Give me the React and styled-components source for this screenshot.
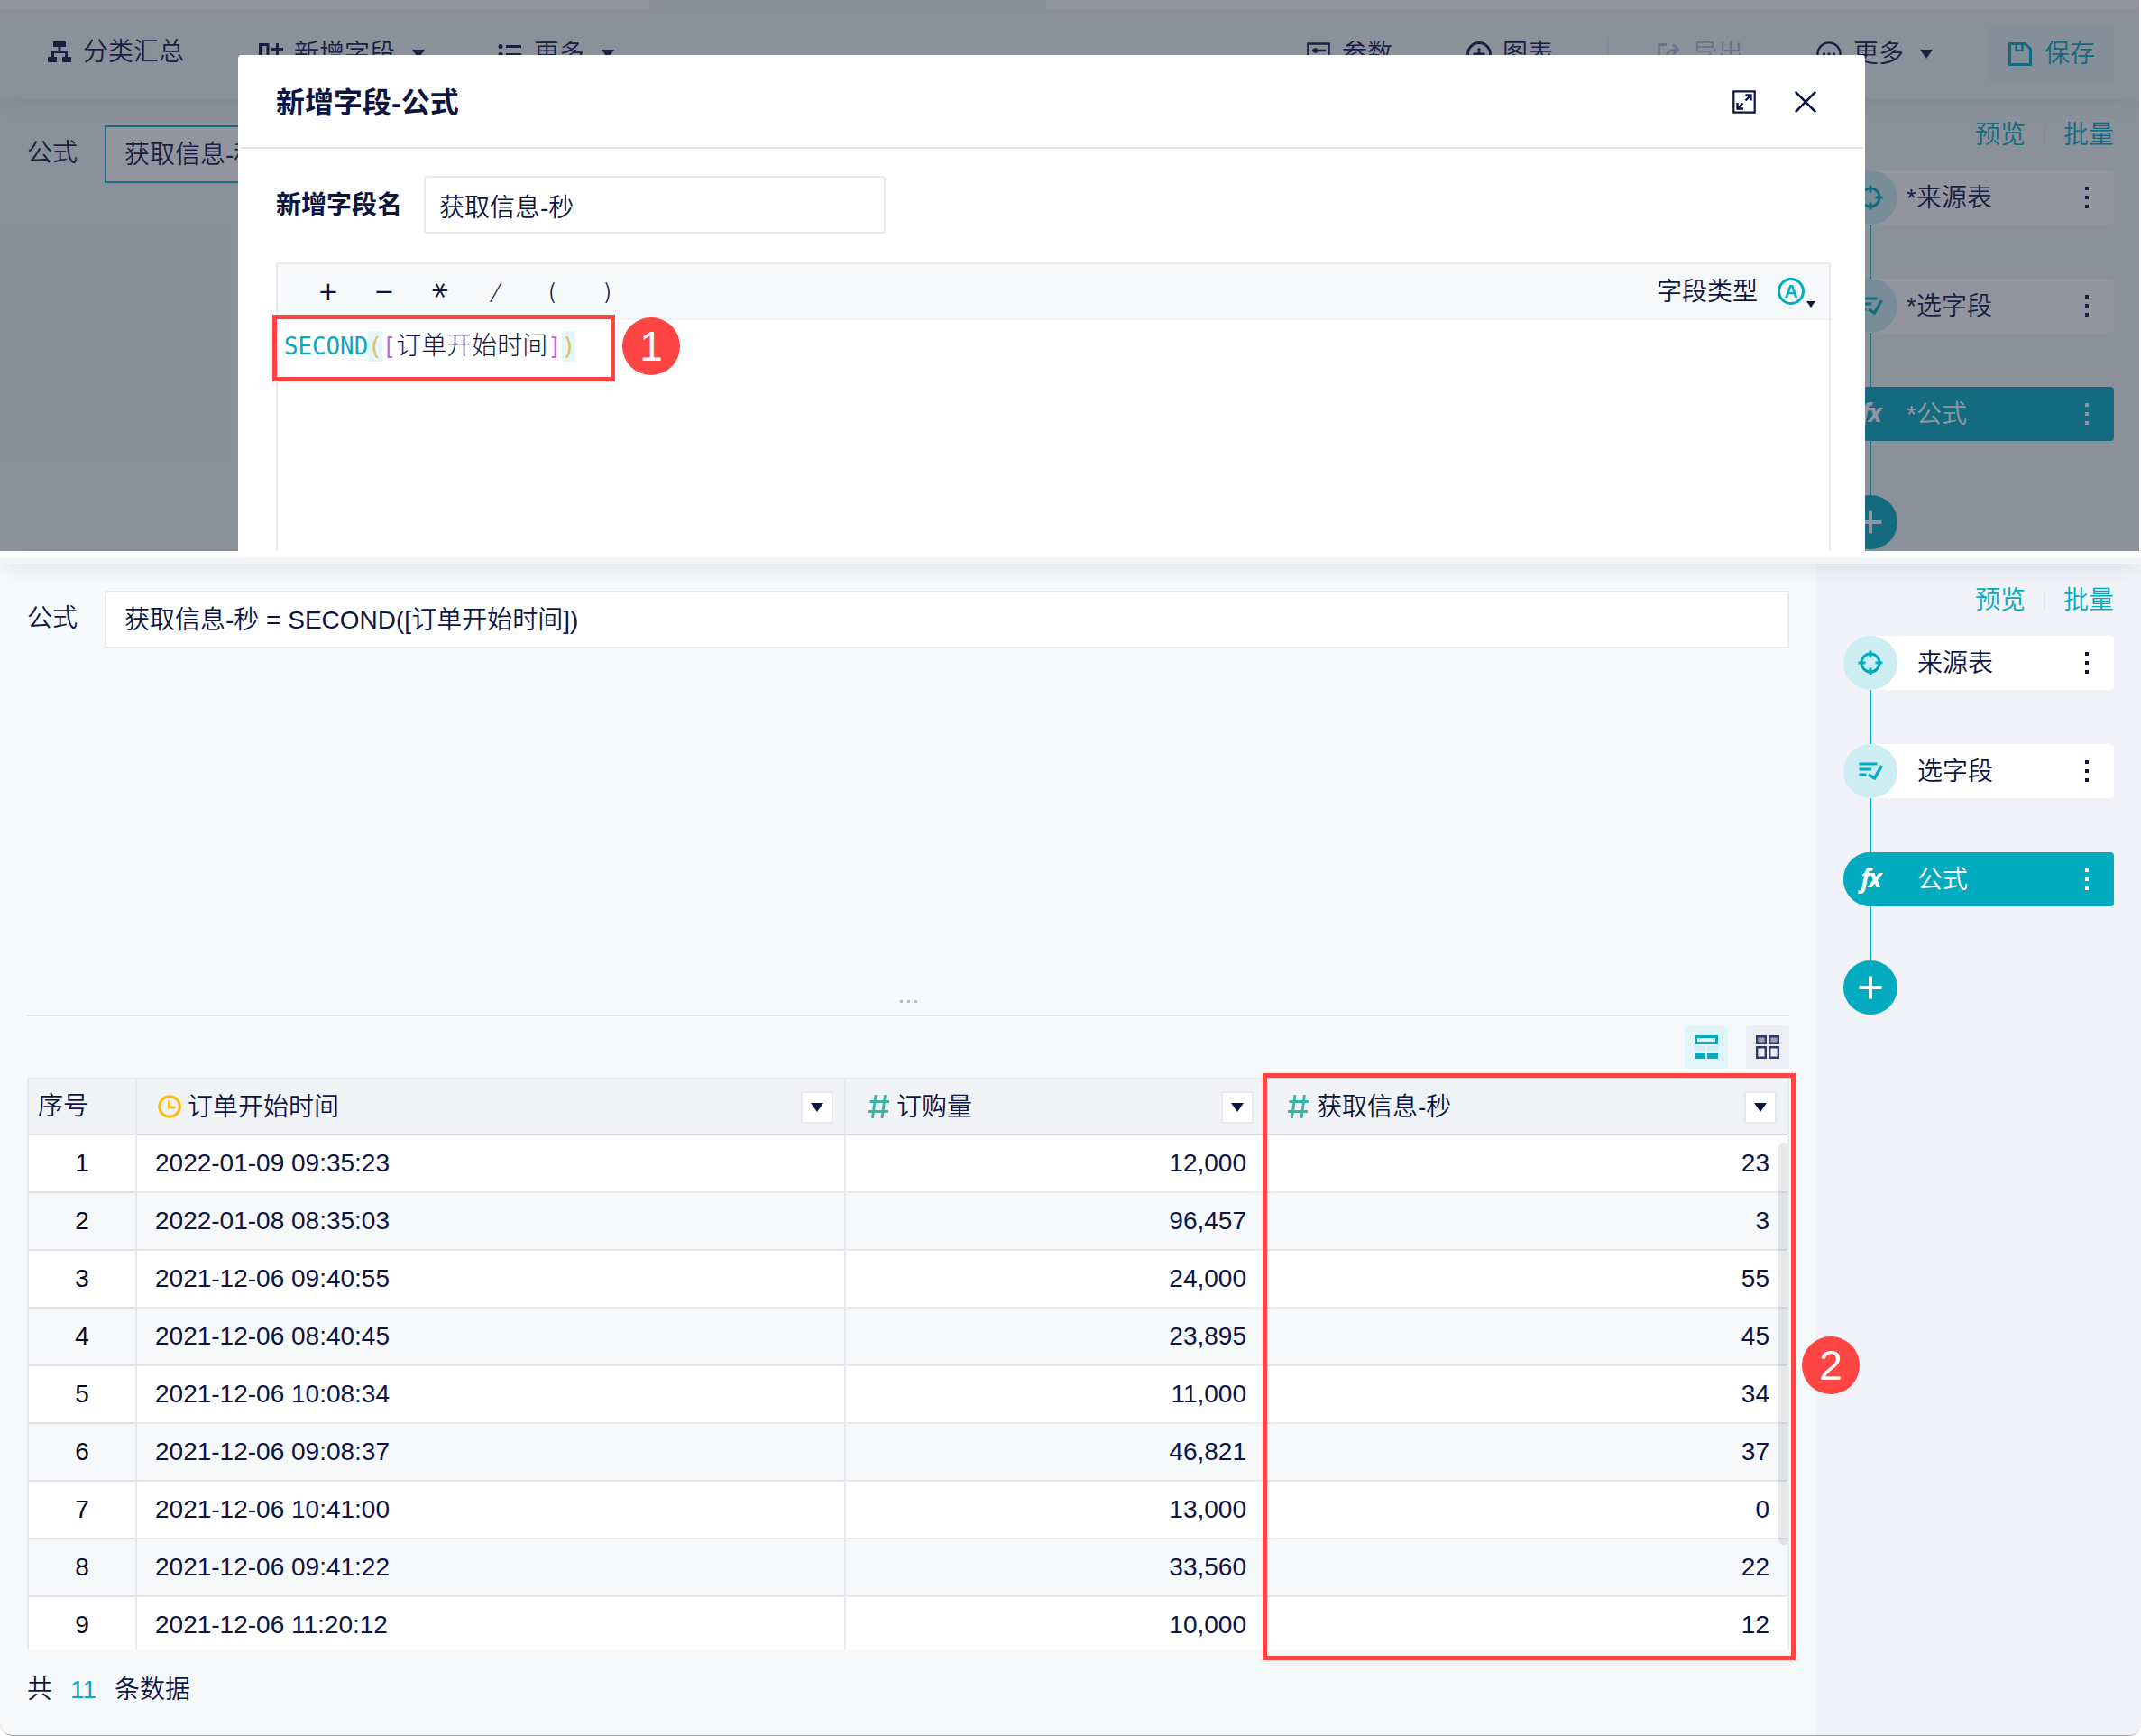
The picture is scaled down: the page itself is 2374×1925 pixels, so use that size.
import React from "react";
import styled, { createGlobalStyle } from "styled-components";

const INK = "#0c1442";
const TEAL = "#02abbf";
const RED = "#ff4444";
const LINE = "#e8eaed";

const Global = createGlobalStyle`
  * { box-sizing: border-box; }
  html, body { margin: 0; padding: 0; background: #fff; }
  body {
    width: 2374px;
    height: 1925px;
    overflow: hidden;
    font-family: "Liberation Sans", "Noto Sans CJK SC", sans-serif;
    font-size: 28px;
    font-weight: 350;
    line-height: 36px;
    color: ${INK};
    white-space: nowrap;
  }
  svg { display: block; flex: none; }
`;

const Page = styled.main`
  position: relative;
  width: 2374px;
  height: 1925px;
  overflow: hidden;
  display: flex;
  flex-direction: column;
`;

/* ---------- shared pieces ---------- */

const Caret = styled.i`
  width: 0;
  height: 0;
  flex: none;
  border: solid transparent;
  border-width: ${(p) => p.$h || 10}px ${(p) => p.$w || 7}px 0;
  border-top-color: ${INK};
  margin-left: ${(p) => p.$ml || 0}px;
`;

const Sidebar = styled.aside`
  flex: 1;
  padding: 23px ${(p) => p.$right}px 0 30px;
  background: ${(p) => p.$bg || "transparent"};
  display: flex;
  flex-direction: column;
`;

const Links = styled.div`
  display: flex;
  align-items: center;
  justify-content: flex-end;
  height: 36px;
  margin-bottom: 21px;
  color: ${TEAL};
`;

const LinkRule = styled.span`
  width: 2px;
  height: 20px;
  margin: 0 20px;
  background: #e6e8ee;
`;

const Node = styled.div`
  display: flex;
  align-items: center;
  height: 60px;
  border-radius: 30px 4px 4px 30px;
  background: ${(p) => (p.$active ? TEAL : "#fff")};
  color: ${(p) => (p.$active ? "#fff" : INK)};
`;

const Bubble = styled.span`
  width: 60px;
  height: 60px;
  flex: none;
  border-radius: 50%;
  display: flex;
  align-items: center;
  justify-content: center;
  background: ${(p) => (p.$solid ? TEAL : "#cceef2")};
  color: ${(p) => (p.$solid ? "#fff" : TEAL)};
`;

const NodeName = styled.span`
  flex: 1;
  padding: 1px 0 0 ${(p) => (p.$starred ? 10 : 22)}px;
`;

const Connector = styled.div`
  width: 2px;
  height: 60px;
  margin-left: 29px;
  background: ${TEAL};
`;

const Dots = styled.span`
  display: flex;
  flex-direction: column;
  gap: 6px;
  margin-right: 28px;
  i { width: 4px; height: 4px; background: currentColor; }
`;

const FxText = styled.span`
  font: italic 700 28px/28px "Open Sans", "Noto Sans", sans-serif;
  letter-spacing: -2px;
  padding-bottom: 5px;
`;

function TargetIcon() {
  return (
    <svg width="28" height="28" viewBox="0 0 28 28" fill="none" stroke="currentColor" strokeWidth="3">
      <circle cx="14" cy="14" r="10" />
      <path d="M14 .5v8M14 19.5v8M.5 14h8M19.5 14h8" />
    </svg>
  );
}

function SelectIcon() {
  return (
    <svg width="28" height="28" viewBox="0 0 28 28" fill="none" stroke="currentColor" strokeWidth="3">
      <path d="M1.5 6h20M1.5 12h13.5M1.5 18h8" />
      <path d="M12 18l6.5 4 8-14" strokeWidth="3.4" />
    </svg>
  );
}

function PlusIcon() {
  return (
    <svg width="26" height="26" viewBox="0 0 26 26" stroke="currentColor" strokeWidth="4">
      <path d="M.5 13h25M13 .5v25" />
    </svg>
  );
}

function Flow({ starred }) {
  const mark = starred ? "*" : "";
  const dots = (
    <Dots><i /><i /><i /></Dots>
  );
  return (
    <>
      <Links>
        <span>预览</span>
        <LinkRule />
        <span>批量</span>
      </Links>
      <Node>
        <Bubble><TargetIcon /></Bubble>
        <NodeName $starred={starred}>{mark}来源表</NodeName>
        {dots}
      </Node>
      <Connector />
      <Node>
        <Bubble><SelectIcon /></Bubble>
        <NodeName $starred={starred}>{mark}选字段</NodeName>
        {dots}
      </Node>
      <Connector />
      <Node $active>
        <Bubble $solid><FxText>fx</FxText></Bubble>
        <NodeName $starred={starred}>{mark}公式</NodeName>
        {dots}
      </Node>
      <Connector />
      <Bubble $solid><PlusIcon /></Bubble>
    </>
  );
}

const FormulaRow = styled.div`
  display: flex;
  align-items: center;
  height: 64px;
`;

const FormulaLabel = styled.span`
  width: 86px;
  padding: 0 0 3px 0;
`;

const FormulaBox = styled.div`
  flex: 1;
  height: 64px;
  padding: 13px 20px 0;
  border: 2px solid ${(p) => (p.$focus ? TEAL : LINE)};
  background: #fff;
`;

/* ---------- upper screen ---------- */

const Upper = styled.section`
  position: relative;
  width: 2372px;
  height: 611px;
  flex: none;
  overflow: hidden;
  background: #f0f6f5;
`;

const TabStrip = styled.div`
  display: grid;
  grid-template-columns: 720px 440px 1fr;
  height: 9px;
  span:nth-child(odd) { background: #fff; }
`;

const Toolbar = styled.header`
  display: flex;
  align-items: center;
  height: 100px;
  padding: 2px 28px 0 53px;
  box-shadow: 0 8px 22px -6px rgba(30, 35, 80, 0.1);
`;

const Tool = styled.div`
  display: flex;
  align-items: center;
  height: 60px;
  margin-left: ${(p) => p.$ml || 0}px;
  padding-bottom: ${(p) => p.$lift || 0}px;
  gap: ${(p) => p.$gap || 13}px;
  color: ${(p) => (p.$muted ? "#b4b7cb" : INK)};
`;

const Push = styled.span`
  flex: 1;
`;

const ToolRule = styled.span`
  width: 2px;
  height: 36px;
  margin: 0 54px 0 60px;
  background: #e6e9ee;
`;

const Save = styled.div`
  display: flex;
  align-items: center;
  width: 141px;
  height: 60px;
  gap: 14px;
  margin-left: 60px;
  padding: 0 0 1px 24px;
  border-radius: 4px;
  background: #e3f3f5;
  color: ${TEAL};
`;

const UpperBody = styled.div`
  display: flex;
  height: 502px;
`;

const UpperMain = styled.div`
  width: 2014px;
  flex: none;
  padding: 30px 30px 0;
  display: flex;
  flex-direction: column;
  justify-content: space-between;
`;

const BottomRule = styled.div`
  height: 2px;
  background: #e4e5ec;
`;

const Shade = styled.div`
  position: absolute;
  inset: 0;
  background: rgba(37, 43, 63, 0.5);
`;

const Dialog = styled.div`
  position: absolute;
  left: 264px;
  top: 61px;
  width: 1804px;
  height: 550px;
  border-radius: 4px 4px 0 0;
  background: #fff;
  overflow: hidden;
`;

const DialogHead = styled.div`
  display: flex;
  align-items: center;
  height: 104px;
  margin: 0 2px;
  padding: 2px 52px 0 40px;
  border-bottom: 2px solid #e2e3e8;
`;

const DialogTitle = styled.h1`
  flex: 1;
  margin: 0;
  padding-top: 1px;
  font-size: 32px;
  font-weight: 700;
`;

const DialogActions = styled.div`
  display: flex;
  align-items: center;
  gap: 43px;
`;

const DialogBody = styled.div`
  padding: 30px 38px 0 42px;
`;

const NameRow = styled.div`
  display: flex;
  align-items: center;
  height: 64px;
`;

const NameLabel = styled.span`
  width: 164px;
  padding-top: 1px;
  font-weight: 700;
`;

const NameInput = styled.div`
  width: 512px;
  height: 64px;
  padding: 16px 15px 0;
  border: 2px solid #e8e8ed;
  border-radius: 4px;
`;

const Editor = styled.div`
  height: 360px;
  margin-top: 32px;
  border: 2px solid #e8e8ed;
`;

const EditorBar = styled.div`
  display: flex;
  align-items: center;
  height: 62px;
  padding: 0 15px 0 25px;
  border-bottom: 2px solid #f1f2f5;
  background: #f7f8fa;
`;

const Operator = styled.span`
  width: 62px;
  padding-bottom: ${(p) => p.$lift || 0}px;
  text-align: center;
  font-family: ${(p) => (p.$mono ? '"DejaVu Sans Mono"' : '"Noto Sans CJK SC"')}, sans-serif;
  font-weight: ${(p) => p.$weight || 350};
  font-size: ${(p) => p.$size || 36}px;
  line-height: 36px;
  transform: ${(p) => p.$turn || "none"};
`;

const FieldType = styled.div`
  display: flex;
  align-items: center;
  margin-left: auto;
`;

const FieldTypeName = styled.span`
  padding-top: 1px;
  margin-right: 22px;
`;

const CaretLow = styled.span`
  padding-top: 29px;
`;

const Code = styled.div`
  padding: 12px 0 0 7px;
  font-family: "DejaVu Sans Mono", "Noto Sans CJK SC", monospace;
  font-size: 25.6px;
  font-weight: 300;
  line-height: 34px;
  display: flex;
`;

const Tok = styled.span`
  height: 34px;
  color: ${(p) => p.$c};
  font-size: ${(p) => p.$size || 25.8}px;
  background: ${(p) => (p.$hit ? "#e4f6f9" : "transparent")};
`;

function OrgIcon() {
  return (
    <svg width="26" height="24" viewBox="0 0 26 24" fill={INK}>
      <path d="M6 0h14v6H6zM0 17h10v6H0zM16 17h10v6H16z" />
      <path d="M13 5v6M5.500 18v-6.500h15V18" fill="none" stroke={INK} strokeWidth="3" />
    </svg>
  );
}

function AddFieldIcon() {
  return (
    <svg width="27" height="26" viewBox="0 0 27 26" fill="none" stroke={INK} strokeWidth="3">
      <path d="M1.500 2.500h8.500v20H1.500zM14 7.500h13M20.500 1v13" />
    </svg>
  );
}

function ListIcon() {
  return (
    <svg width="27" height="24" viewBox="0 0 27 24" fill={INK}>
      <path d="M9 2h17v3H9zM9 11h17v3H9zM9 20h17v3H9z" />
      <circle cx="3" cy="3.500" r="2.500" />
      <circle cx="3" cy="12.500" r="2.500" />
      <circle cx="3" cy="21.500" r="2.500" />
    </svg>
  );
}

function ParamIcon() {
  return (
    <svg width="26" height="26" viewBox="0 0 26 26" fill="none" stroke={INK} strokeWidth="2.600">
      <path d="M1.500 1.500h23v23h-23zM6 9h15M5 17h15" />
      <circle cx="9.500" cy="9" r="1.500" />
      <circle cx="16.500" cy="17" r="1.500" />
    </svg>
  );
}

function CirclePlusIcon() {
  return (
    <svg width="28" height="28" viewBox="0 0 28 28" fill="none" stroke={INK} strokeWidth="2.800">
      <circle cx="14" cy="14" r="12.500" />
      <path d="M7.500 14h13M14 7.500v13" />
    </svg>
  );
}

function ExportIcon() {
  return (
    <svg width="26" height="26" viewBox="0 0 26 26" fill="none" stroke="#b4b7cb" strokeWidth="2.800">
      <path d="M10 2.500H1.500v22h21V18" />
      <path d="M10 17c0-6 3-9 12-9M17 2.500l6 5.500-6 5.500" />
    </svg>
  );
}

function MoreIcon() {
  return (
    <svg width="28" height="28" viewBox="0 0 28 28" fill="none" stroke={INK} strokeWidth="2.400">
      <circle cx="14" cy="14" r="12.600" />
      <path d="M7 14h3M12.500 14h3M18 14h3" strokeWidth="3" />
    </svg>
  );
}

function SaveIcon() {
  return (
    <svg width="26" height="26" viewBox="0 0 26 26" fill="none" stroke="currentColor" strokeWidth="3">
      <path d="M1.500 1.500h17l6 6v17h-23z" />
      <path d="M8.500 2v7h7V2" strokeWidth="2.600" />
    </svg>
  );
}

function ExpandIcon() {
  return (
    <svg width="26" height="26" viewBox="0 0 26 26" fill="none" stroke={INK} strokeWidth="2.200">
      <path d="M1.300 1.300h23.400v23.400H1.300z" />
      <path d="M14.500 5.500h6v6M20.500 5.500l-6 6M5.500 14v6.500h6.500M5.500 20.500l6-6" strokeWidth="2.400" />
    </svg>
  );
}

function CloseIcon() {
  return (
    <svg width="24" height="24" viewBox="0 0 24 24" stroke={INK} strokeWidth="2.600">
      <path d="M.8.8l22.400 22.400M23.200.8L.8 23.200" />
    </svg>
  );
}

const LetterBadge = styled.b`
  width: 30px;
  height: 30px;
  border: 3px solid ${TEAL};
  border-radius: 50%;
  color: ${TEAL};
  font-size: 21px;
  font-weight: 700;
  line-height: 24px;
  text-align: center;
`;

function UpperScreen() {
  return (
    <Upper>
      <TabStrip><span /><span /><span /></TabStrip>
      <Toolbar>
        <Tool $lift={5}><OrgIcon />分类汇总</Tool>
        <Tool $ml={83} $gap={12}><AddFieldIcon />新增字段<Caret $ml={7} /></Tool>
        <Tool $ml={81}><ListIcon />更多<Caret $ml={6} /></Tool>
        <Push />
        <Tool><ParamIcon />参数</Tool>
        <Tool $ml={82} $gap={12}><CirclePlusIcon />图表</Tool>
        <ToolRule />
        <Tool $muted><ExportIcon />导出</Tool>
        <Tool $ml={81}><MoreIcon />更多<Caret $ml={5} /></Tool>
        <Save><SaveIcon />保存</Save>
      </Toolbar>
      <UpperBody>
        <UpperMain>
          <FormulaRow>
            <FormulaLabel>公式</FormulaLabel>
            <FormulaBox $focus>获取信息-秒 = SECOND([订单开始时间])</FormulaBox>
          </FormulaRow>
          <BottomRule />
        </UpperMain>
        <Sidebar $right={28}>
          <Flow starred />
        </Sidebar>
      </UpperBody>
      <Shade />
      <Dialog>
        <DialogHead>
          <DialogTitle>新增字段-公式</DialogTitle>
          <DialogActions><ExpandIcon /><CloseIcon /></DialogActions>
        </DialogHead>
        <DialogBody>
          <NameRow>
            <NameLabel>新增字段名</NameLabel>
            <NameInput>获取信息-秒</NameInput>
          </NameRow>
          <Editor>
            <EditorBar>
              <Operator $lift={5}>+</Operator>
              <Operator $lift={5}>−</Operator>
              <Operator $mono $size={36} $turn="translate(-6px, -1px) rotate(90deg)">*</Operator>
              <Operator $lift={4} $size={22} $turn="skewX(-14deg)">/</Operator>
              <Operator $lift={3} $size={23}>(</Operator>
              <Operator $lift={3} $size={23}>)</Operator>
              <FieldType>
                <FieldTypeName>字段类型</FieldTypeName>
                <LetterBadge>A</LetterBadge>
                <CaretLow><Caret $w={5} $h={7} $ml={2} as="div" /></CaretLow>
              </FieldType>
            </EditorBar>
            <Code>
              <Tok $c={TEAL}>SECOND</Tok>
              <Tok $c="#e0c060" $hit>(</Tok>
              <Tok $c="#b86be0">[</Tok>
              <Tok $c={INK} $size={28}>订单开始时间</Tok>
              <Tok $c="#b86be0">]</Tok>
              <Tok $c="#e0c060" $hit>)</Tok>
            </Code>
          </Editor>
        </DialogBody>
      </Dialog>
    </Upper>
  );
}

/* ---------- lower screen ---------- */

const Lower = styled.section`
  display: flex;
  flex-direction: column;
  margin-top: 7px;
  height: 1307px;
  border-bottom: 1px solid #a2a3a6;
  border-radius: 0 0 14px 14px;
  overflow: hidden;
  background: #f7f8fa;
`;

/* Only the lower edge of the header shows; its shadow falls on the body. */
const HeadEdge = styled.div`
  position: relative;
  height: 100px;
  margin-top: -93px;
  flex: none;
  background: #f2f4f8;
  box-shadow: 0 8px 22px -6px rgba(30, 35, 60, 0.12);
`;

const LowerBody = styled.div`
  flex: 1;
  display: flex;
`;

const LowerMain = styled.div`
  width: 2014px;
  flex: none;
  padding: 30px 30px 0;
  display: flex;
  flex-direction: column;
`;

const Grip = styled.div`
  display: flex;
  justify-content: center;
  gap: 5px;
  height: 16px;
  margin-top: 390px;
  i { width: 3px; height: 3px; background: #b9bcc8; }
`;

const ViewBar = styled.div`
  display: flex;
  justify-content: flex-end;
  gap: 20px;
  height: 70px;
  padding-top: 10px;
  border-top: 2px solid #e6e7ea;
`;

const ViewButton = styled.span`
  display: flex;
  align-items: center;
  justify-content: center;
  width: 48px;
  height: 48px;
  border-radius: 4px;
  background: ${(p) => (p.$on ? "#e2f5f8" : "#edeef3")};
`;

const Table = styled.div`
  position: relative;
  height: 634px;
  overflow: hidden;
  border: solid ${LINE};
  border-width: 2px 2px 0 2px;
  background: #fff;
`;

const Row = styled.div`
  display: grid;
  grid-template-columns: 120px 786px 464px 1fr;
  height: ${(p) => (p.$head ? 62 : 64)}px;
  background: ${(p) => (p.$head ? "#f2f3f7" : p.$even ? "#f7f8fa" : "#fff")};
`;

const Cell = styled.div`
  display: flex;
  align-items: center;
  justify-content: ${(p) => p.$align || "flex-start"};
  padding: 0 ${(p) => p.$pr || 0}px 0 ${(p) => p.$pl || 0}px;
  border-right: 2px solid ${LINE};
  border-bottom: 2px solid ${(p) => (p.$index ? "#dfe1e9" : p.$head ? "#d0d2dc" : LINE)};
  color: ${(p) => (p.$index && !p.$head ? "#020a26" : INK)};
  &:last-child { border-right: 0; }
`;

const HeadName = styled.span`
  flex: 1;
  padding: 2px 0 0 ${(p) => p.$gap}px;
`;

const Filter = styled.span`
  display: flex;
  align-items: center;
  justify-content: center;
  width: 36px;
  height: 36px;
  margin-top: 1px;
  border: 2px solid ${LINE};
  background: #fff;
`;

const Scroll = styled.div`
  position: absolute;
  right: -2px;
  top: 70px;
  width: 12px;
  height: 446px;
  border-radius: 6px;
  background: rgba(20, 25, 35, 0.1);
`;

const Total = styled.div`
  display: flex;
  gap: 20px;
  padding-top: 27px;
  b { color: ${TEAL}; font-weight: inherit; }
`;

const Frame = styled.div`
  position: absolute;
  left: ${(p) => p.$x}px;
  top: ${(p) => p.$y}px;
  width: ${(p) => p.$w}px;
  height: ${(p) => p.$h}px;
  border: 5px solid ${RED};
`;

const Step = styled.div`
  position: absolute;
  left: ${(p) => p.$x}px;
  top: ${(p) => p.$y}px;
  width: 64px;
  height: 64px;
  border-radius: 50%;
  background: ${RED};
  color: #fff;
  font-size: 46px;
  line-height: 65px;
  text-align: center;
`;

function ClockIcon() {
  return (
    <svg width="26" height="26" viewBox="0 0 26 26" fill="none" stroke="#ffba0f" strokeWidth="3">
      <circle cx="13" cy="13" r="11.300" />
      <path d="M12.500 6.500V14h7" />
    </svg>
  );
}

function HashIcon() {
  return (
    <svg width="23" height="26" viewBox="0 0 23 26" fill="none" stroke="#38b5a5" strokeWidth="2.800">
      <path d="M8 0L4.500 26M18.500 0L15 26M1.500 7.500H23M0 18.500h22" />
    </svg>
  );
}

function SplitViewIcon() {
  return (
    <svg width="26" height="26" viewBox="0 0 26 26" fill={TEAL}>
      <path d="M1.500 1.500h23v7h-23z" fill="none" stroke={TEAL} strokeWidth="3" />
      <path d="M0 12h12v5H0zM14 12h12v5H14z" fill="#cdeef2" />
      <path d="M0 20h12v6H0zM14 20h12v6H14z" />
    </svg>
  );
}

function GridViewIcon() {
  return (
    <svg width="26" height="26" viewBox="0 0 26 26" fill="none" stroke="#31376a" strokeWidth="2.400">
      <path d="M1.200 1.200h9.600v7.600H1.200zM15.200 1.200h9.600v7.600h-9.600z" fill="#9fa3b8" />
      <path d="M1.200 13.200h9.600v11.600H1.200zM15.200 13.200h9.600v11.600h-9.600z" />
    </svg>
  );
}

const RECORDS = [
  ["2022-01-09 09:35:23", "12,000", "23"],
  ["2022-01-08 08:35:03", "96,457", "3"],
  ["2021-12-06 09:40:55", "24,000", "55"],
  ["2021-12-06 08:40:45", "23,895", "45"],
  ["2021-12-06 10:08:34", "11,000", "34"],
  ["2021-12-06 09:08:37", "46,821", "37"],
  ["2021-12-06 10:41:00", "13,000", "0"],
  ["2021-12-06 09:41:22", "33,560", "22"],
  ["2021-12-06 11:20:12", "10,000", "12"],
];

function DataTable() {
  return (
    <Table>
      <Row $head>
        <Cell $head $index $pl={10}>序号</Cell>
        <Cell $head $pl={23} $pr={12}>
          <ClockIcon /><HeadName $gap={7}>订单开始时间</HeadName><Filter><Caret /></Filter>
        </Cell>
        <Cell $head $pl={25} $pr={10}>
          <HashIcon /><HeadName $gap={8}>订购量</HeadName><Filter><Caret /></Filter>
        </Cell>
        <Cell $head $pl={26} $pr={12}>
          <HashIcon /><HeadName $gap={9}>获取信息-秒</HeadName><Filter><Caret /></Filter>
        </Cell>
      </Row>
      {RECORDS.map(([time, amount, second], i) => (
        <Row key={i} $even={i % 2 === 1}>
          <Cell $index $align="center">{i + 1}</Cell>
          <Cell $pl={20}>{time}</Cell>
          <Cell $align="flex-end" $pr={18}>{amount}</Cell>
          <Cell $align="flex-end" $pr={20}>{second}</Cell>
        </Row>
      ))}
      <Scroll />
    </Table>
  );
}

function LowerScreen() {
  return (
    <Lower>
      <HeadEdge />
      <LowerBody>
        <LowerMain>
          <FormulaRow>
            <FormulaLabel>公式</FormulaLabel>
            <FormulaBox>获取信息-秒 = SECOND([订单开始时间])</FormulaBox>
          </FormulaRow>
          <Grip><i /><i /><i /></Grip>
          <ViewBar>
            <ViewButton $on><SplitViewIcon /></ViewButton>
            <ViewButton><GridViewIcon /></ViewButton>
          </ViewBar>
          <DataTable />
          <Total>共<b>11</b>条数据</Total>
        </LowerMain>
        <Sidebar $right={30} $bg="#f2f3f8">
          <Flow />
        </Sidebar>
      </LowerBody>
    </Lower>
  );
}

export default function App() {
  return (
    <>
      <Global />
      <Page>
        <UpperScreen />
        <LowerScreen />
        <Frame $x={302} $y={349} $w={380} $h={74} />
        <Step $x={690} $y={352}>1</Step>
        <Frame $x={1400} $y={1190} $w={591} $h={651} />
        <Step $x={1998} $y={1482}>2</Step>
      </Page>
    </>
  );
}
